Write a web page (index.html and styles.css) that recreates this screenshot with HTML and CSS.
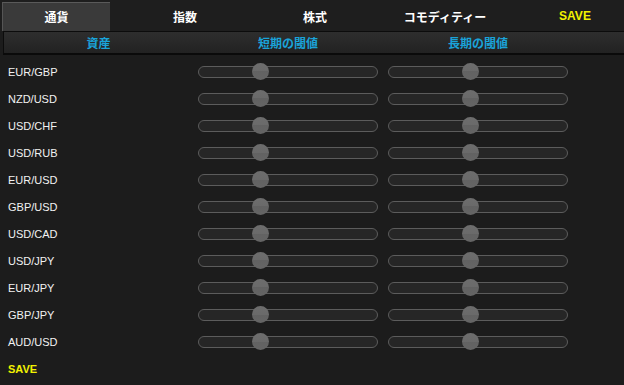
FILE: index.html
```html
<!DOCTYPE html>
<html lang="ja">
<head>
<meta charset="utf-8">
<link rel="stylesheet" href="styles.css">
</head>
<body>
<div class="app">
  <nav class="tabs">
    <div class="tab tab-active">通貨</div>
    <div class="tab">指数</div>
    <div class="tab">株式</div>
    <div class="tab">コモディティー</div>
    <div class="tab tab-save">SAVE</div>
  </nav>
  <div class="head">
    <div class="col">資産</div>
    <div class="col">短期の閾値</div>
    <div class="col">長期の閾値</div>
  </div>
  <div class="rows">
    <div class="row"><div class="name">EUR/GBP</div><div class="cell"><div class="track"><span class="thumb" style="left:53px"></span></div></div><div class="cell"><div class="track"><span class="thumb" style="left:73px"></span></div></div></div>
    <div class="row"><div class="name">NZD/USD</div><div class="cell"><div class="track"><span class="thumb" style="left:53px"></span></div></div><div class="cell"><div class="track"><span class="thumb" style="left:73px"></span></div></div></div>
    <div class="row"><div class="name">USD/CHF</div><div class="cell"><div class="track"><span class="thumb" style="left:53px"></span></div></div><div class="cell"><div class="track"><span class="thumb" style="left:73px"></span></div></div></div>
    <div class="row"><div class="name">USD/RUB</div><div class="cell"><div class="track"><span class="thumb" style="left:53px"></span></div></div><div class="cell"><div class="track"><span class="thumb" style="left:73px"></span></div></div></div>
    <div class="row"><div class="name">EUR/USD</div><div class="cell"><div class="track"><span class="thumb" style="left:53px"></span></div></div><div class="cell"><div class="track"><span class="thumb" style="left:73px"></span></div></div></div>
    <div class="row"><div class="name">GBP/USD</div><div class="cell"><div class="track"><span class="thumb" style="left:53px"></span></div></div><div class="cell"><div class="track"><span class="thumb" style="left:73px"></span></div></div></div>
    <div class="row"><div class="name">USD/CAD</div><div class="cell"><div class="track"><span class="thumb" style="left:53px"></span></div></div><div class="cell"><div class="track"><span class="thumb" style="left:73px"></span></div></div></div>
    <div class="row"><div class="name">USD/JPY</div><div class="cell"><div class="track"><span class="thumb" style="left:53px"></span></div></div><div class="cell"><div class="track"><span class="thumb" style="left:73px"></span></div></div></div>
    <div class="row"><div class="name">EUR/JPY</div><div class="cell"><div class="track"><span class="thumb" style="left:53px"></span></div></div><div class="cell"><div class="track"><span class="thumb" style="left:73px"></span></div></div></div>
    <div class="row"><div class="name">GBP/JPY</div><div class="cell"><div class="track"><span class="thumb" style="left:53px"></span></div></div><div class="cell"><div class="track"><span class="thumb" style="left:73px"></span></div></div></div>
    <div class="row"><div class="name">AUD/USD</div><div class="cell"><div class="track"><span class="thumb" style="left:53px"></span></div></div><div class="cell"><div class="track"><span class="thumb" style="left:73px"></span></div></div></div>
  </div>
  <div class="save">SAVE</div>
</div>
</body>
</html>
```
FILE: styles.css
```css
* { box-sizing: border-box; }
html, body { margin: 0; padding: 0; background: #1c1c1c; }
body {
  width: 624px;
  height: 385px;
  overflow: hidden;
  font-family: "Liberation Sans", "Noto Sans CJK JP", sans-serif;
  color: #f0f0f0;
}
.app { width: 624px; height: 385px; }

.tabs {
  display: flex;
  height: 31px;
  padding: 2px 0 0 2px;
  background: #1e1e1e;
  overflow: hidden;
}
.tab {
  flex: 0 0 130px;
  display: flex;
  align-items: center;
  justify-content: center;
  font-size: 12px;
  font-weight: bold;
  color: #ffffff;
  padding-bottom: 1px;
}
.tab-active {
  flex: 0 0 108px;
  margin-right: 10px;
  background: #3a3a3a;
  border-top: 1px solid #5a5a5a;
  border-left: 1px solid #555555;
}
.tab-save {
  color: #f2f200;
  font-size: 12px;
}

.head {
  display: flex;
  height: 24px;
  margin-left: 3px;
  border-top: 1px solid #0c0c0c;
  border-bottom: 2px solid #0a0a0a;
  border-left: 1px solid #0c0c0c;
  background: linear-gradient(#2e2e2e, #222222);
}
.head .col {
  flex: 0 0 190px;
  display: flex;
  align-items: center;
  justify-content: center;
  font-size: 12px;
  font-weight: bold;
  color: #1aa3d9;
}
.head .col:first-child { flex-basis: 189px; }

.rows { padding-top: 3px; padding-left: 3px; }
.row {
  display: flex;
  align-items: center;
  height: 27px;
}
.name {
  flex: 0 0 190px;
  padding-left: 5px;
  font-size: 11px;
  color: #f2f2f2;
}
.cell {
  flex: 0 0 190px;
  display: flex;
  justify-content: center;
}
.track {
  position: relative;
  width: 180px;
  height: 12px;
  border: 1px solid #5c5c5c;
  border-radius: 6px;
  background: #262626;
}
.thumb {
  position: absolute;
  top: -4px;
  width: 17px;
  height: 17px;
  border-radius: 50%;
  background: linear-gradient(#6d6d6d 0%, #6a6a6a 50%, #626262 50%, #656565 100%);
}

.save {
  height: 27px;
  display: flex;
  align-items: center;
  padding-left: 8px;
  font-size: 11px;
  font-weight: bold;
  color: #f2f200;
}
```
